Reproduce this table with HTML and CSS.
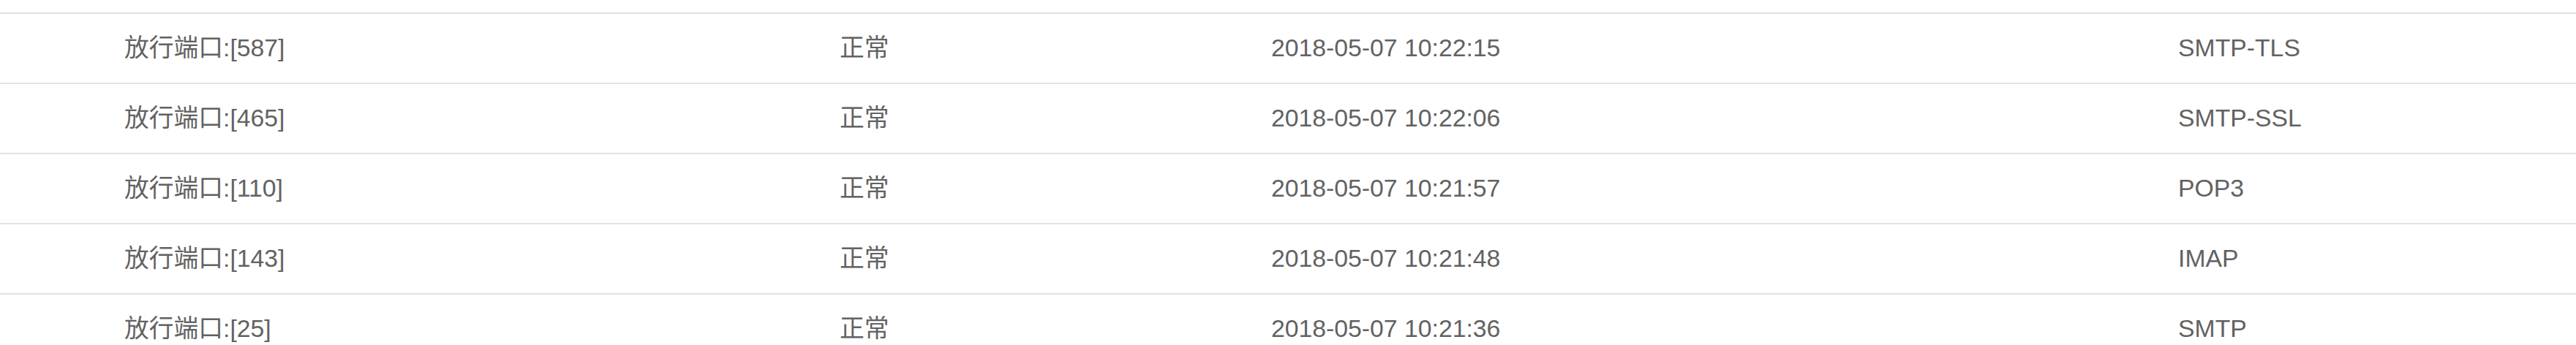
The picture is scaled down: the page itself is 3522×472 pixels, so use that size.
FILE: index.html
```html
<!DOCTYPE html>
<html lang="zh-CN">
<head>
<meta charset="utf-8">
<title>端口列表</title>
<link rel="stylesheet" href="styles.css">
</head>
<body>
<div class="table">
  <div class="row">
    <div class="cell">放行端口:[587]</div>
    <div class="cell">正常</div>
    <div class="cell">2018-05-07 10:22:15</div>
    <div class="cell">SMTP-TLS</div>
  </div>
  <div class="row">
    <div class="cell">放行端口:[465]</div>
    <div class="cell">正常</div>
    <div class="cell">2018-05-07 10:22:06</div>
    <div class="cell">SMTP-SSL</div>
  </div>
  <div class="row">
    <div class="cell">放行端口:[110]</div>
    <div class="cell">正常</div>
    <div class="cell">2018-05-07 10:21:57</div>
    <div class="cell">POP3</div>
  </div>
  <div class="row">
    <div class="cell">放行端口:[143]</div>
    <div class="cell">正常</div>
    <div class="cell">2018-05-07 10:21:48</div>
    <div class="cell">IMAP</div>
  </div>
  <div class="row">
    <div class="cell">放行端口:[25]</div>
    <div class="cell">正常</div>
    <div class="cell">2018-05-07 10:21:36</div>
    <div class="cell">SMTP</div>
  </div>
</div>
</body>
</html>
```

FILE: styles.css
```css
html, body {
  margin: 0;
  padding: 0;
  background: #ffffff;
  overflow: hidden;
}

body {
  font-family: "Liberation Sans", Arial, "Noto Sans CJK SC", sans-serif;
  font-size: 33.75px;
  color: #626262;
}

.table {
  padding-top: 17px;
}

.row {
  display: grid;
  grid-template-columns: 978px 590px 1240px 1fr;
  padding-left: 170px;
  height: 94px;
  border-top: 2px solid #e2e2e2;
  align-items: center;
}

.cell {
  white-space: nowrap;
  line-height: 1;
}
```
